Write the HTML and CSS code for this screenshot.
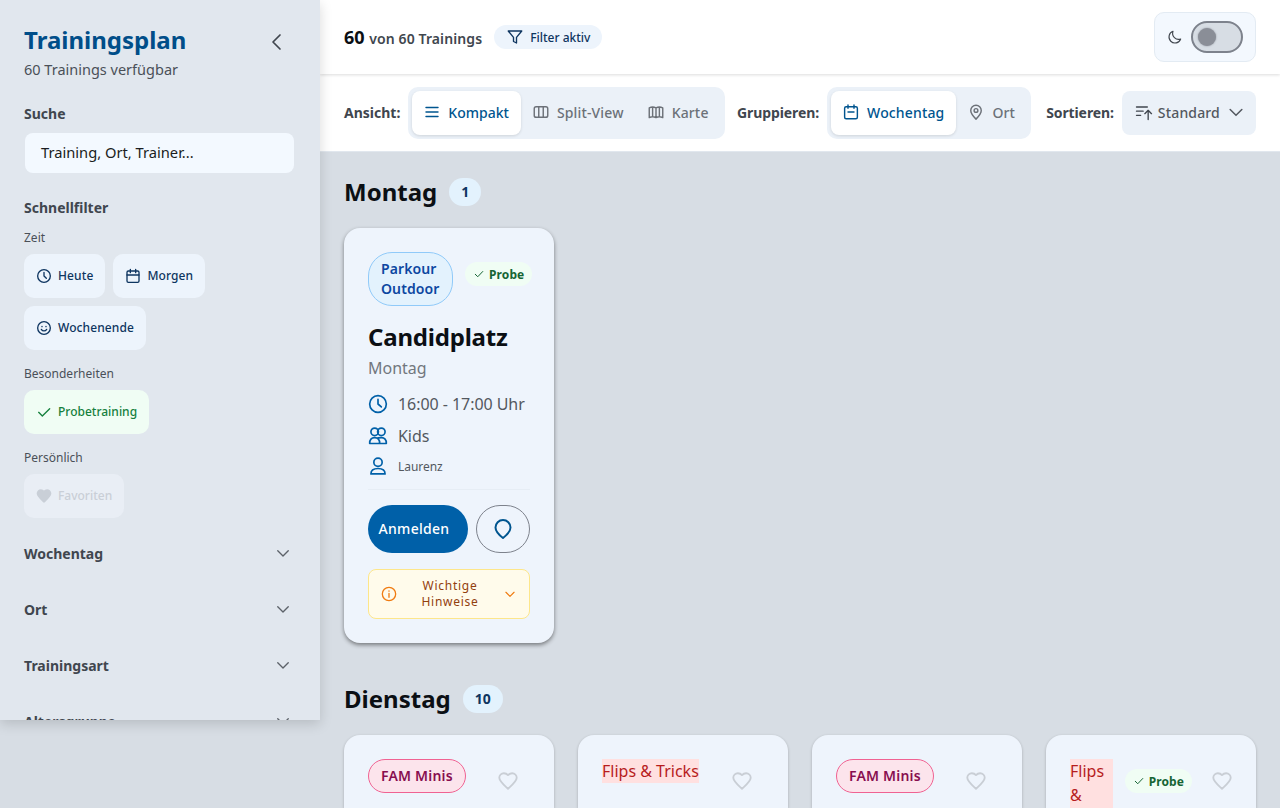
FILE: index.html
```html
<!DOCTYPE html>
<html lang="de">
<head>
    <meta charset="UTF-8">
    <title>Trainingsplan</title>
    <link rel="stylesheet" href="styles.css">
</head>
<body>
<div class="app">
    <aside class="sidebar">
        <div class="side-head">
            <div>
                <h1>Trainingsplan</h1>
                <p class="side-sub">60 Trainings verfügbar</p>
            </div>
            <svg class="side-back" width="24" height="24" viewBox="0 0 24 24"><path d="M15 5l-7 7 7 7"/></svg>
        </div>

        <h2 class="side-title">Suche</h2>
        <div class="search">Training, Ort, Trainer...</div>

        <h2 class="side-title quick">Schnellfilter</h2>
        <div class="small-label">Zeit</div>
        <div class="chips">
            <span class="chip">
                <svg viewBox="0 0 24 24"><circle cx="12" cy="12" r="9.500"/><path d="M12 6.500V12l3.500 3.500"/></svg>Heute
            </span>
            <span class="chip">
                <svg viewBox="0 0 24 24"><rect x="3" y="4.500" width="18" height="17" rx="2"/><path d="M8 2v5M16 2v5M3 10.500h18"/></svg>Morgen
            </span>
            <span class="chip">
                <svg viewBox="0 0 24 24"><circle cx="12" cy="12" r="9.500"/><path d="M8 14c1 1.600 2.400 2.300 4 2.300s3-.7 4-2.300M9 9.500v.5M15 9.500v.5"/></svg>Wochenende
            </span>
        </div>
        <div class="small-label">Besonderheiten</div>
        <div class="chips">
            <span class="chip chip-green">
                <svg viewBox="0 0 24 24"><path d="M4 12.500l5.500 5.500L20.500 7"/></svg>Probetraining
            </span>
        </div>
        <div class="small-label">Persönlich</div>
        <div class="chips chips-last">
            <span class="chip chip-off">
                <svg viewBox="0 0 24 24"><path class="solid" d="M12 21l-1.500-1.300C5.400 15.100 2 12.100 2 8.400 2 5.400 4.400 3 7.400 3c1.700 0 3.400.8 4.600 2.100C13.200 3.800 14.900 3 16.600 3 19.600 3 22 5.400 22 8.400c0 3.700-3.400 6.700-8.500 11.300z"/></svg>Favoriten
            </span>
        </div>

        <div class="acc">Wochentag<svg viewBox="0 0 24 24"><path d="M5 9l7 7 7-7"/></svg></div>
        <div class="acc">Ort<svg viewBox="0 0 24 24"><path d="M5 9l7 7 7-7"/></svg></div>
        <div class="acc">Trainingsart<svg viewBox="0 0 24 24"><path d="M5 9l7 7 7-7"/></svg></div>
        <div class="acc">Altersgruppe<svg viewBox="0 0 24 24"><path d="M5 9l7 7 7-7"/></svg></div>
    </aside>

    <main class="main">
        <header class="topbar">
            <div class="count"><b>60</b> von 60 Trainings</div>
            <span class="filter-pill">
                <svg viewBox="0 0 24 24"><path d="M3 4h18l-7 8.500V20l-4-2v-5.500z"/></svg>Filter aktiv
            </span>
            <div class="theme-box">
                <svg viewBox="0 0 24 24"><path d="M20.500 15A9 9 0 0 1 9 3.500a9 9 0 1 0 11.500 11.500z"/></svg>
                <span class="switch"><span class="knob"></span></span>
            </div>
        </header>

        <div class="toolbar">
            <span class="tool-label">Ansicht:</span>
            <div class="segment">
                <span class="seg active seg-tight">
                    <svg viewBox="0 0 24 24"><path d="M4 6h16M4 12h16M4 18h16"/></svg>Kompakt
                </span>
                <span class="seg">
                    <svg viewBox="0 0 24 24"><rect x="3" y="5" width="18" height="14" rx="2.500"/><path d="M9 5v14M15 5v14"/></svg>Split-View
                </span>
                <span class="seg">
                    <svg viewBox="0 0 24 24"><path d="M3 6.500c3-1.500 6-1.500 9 0 3-1.500 6-1.500 9 0v13c-3-1.500-6-1.500-9 0-3-1.500-6-1.500-9 0zM12 6.500v13M7.500 5.500v13M16.500 5.500v13"/></svg>Karte
                </span>
            </div>
            <span class="tool-label group-label">Gruppieren:</span>
            <div class="segment">
                <span class="seg active">
                    <svg viewBox="0 0 24 24"><rect x="3.500" y="5" width="17" height="16" rx="2"/><path d="M8 2.500V7M16 2.500V7M8 12h8"/></svg>Wochentag
                </span>
                <span class="seg">
                    <svg viewBox="0 0 24 24"><path d="M12 21.500c-4-4-7-7.500-7-11.500a7 7 0 0 1 14 0c0 4-3 7.500-7 11.500z"/><circle cx="12" cy="10" r="2.500"/></svg>Ort
                </span>
            </div>
            <span class="tool-label sort-label">Sortieren:</span>
            <div class="sort">
                <svg class="sort-icon" viewBox="0 0 24 24"><path d="M3 6h13M3 11h8M3 16h5M17 21V10M13 14l4-4 4 4"/></svg>
                Standard
                <svg class="sort-caret" viewBox="0 0 24 24"><path d="M5 9l7 7 7-7"/></svg>
            </div>
        </div>

        <div class="content">
            <div class="day-head">
                <h2>Montag</h2>
                <span class="day-count">1</span>
            </div>
            <div class="grid">
                <article class="card card-first">
                    <div class="card-top">
                        <span class="tag tag-blue">Parkour Outdoor</span>
                        <span class="probe">
                            <svg viewBox="0 0 24 24"><path d="M4.500 12.500l5 5 10-10.500"/></svg>Probe
                        </span>
                    </div>
                    <h3>Candidplatz</h3>
                    <div class="card-day">Montag</div>
                    <div class="info">
                        <svg viewBox="0 0 24 24"><circle cx="12" cy="12" r="10"/><path d="M12 6.500V12l4 3.500"/></svg>
                        16:00 - 17:00 Uhr
                    </div>
                    <div class="info">
                        <svg viewBox="0 0 24 24"><circle cx="8" cy="7" r="4.500"/><circle cx="16" cy="7" r="4.500"/><path d="M2 21c0-4.500 2-7 6-7s6 2.500 6 7zM12.500 14.200c1-.2 2.200-.2 3.500-.2 4 0 6 2.500 6 7h-8"/></svg>
                        Kids
                    </div>
                    <div class="info info-small">
                        <svg viewBox="0 0 24 24"><circle cx="12" cy="7.500" r="5"/><path d="M3.500 21.500c0-4.500 3-6.500 8.500-6.500s8.500 2 8.500 6.500z"/></svg>
                        Laurenz
                    </div>
                    <div class="actions">
                        <span class="btn-main">Anmelden</span>
                        <span class="btn-pin">
                            <svg viewBox="0 0 24 24"><path d="M12 21c-4.500-3.500-7.500-7-7.500-10.500a7.500 7.500 0 0 1 15 0c0 3.500-3 7-7.500 10.500z"/></svg>
                        </span>
                    </div>
                    <div class="notice">
                        <svg viewBox="0 0 24 24"><circle cx="12" cy="12" r="10"/><path d="M12 11v6M12 7.200v.6"/></svg>
                        <span class="notice-text">Wichtige Hinweise</span>
                        <svg class="notice-caret" viewBox="0 0 24 24"><path d="M5 9l7 7 7-7"/></svg>
                    </div>
                </article>
            </div>

            <div class="day-head day-two">
                <h2>Dienstag</h2>
                <span class="day-count">10</span>
            </div>
            <div class="grid">
                <article class="card">
                    <div class="card-top">
                        <span class="tag tag-pink">FAM Minis</span>
                        <svg class="fav" viewBox="0 0 24 24"><path d="M12 20.500l-1.400-1.300C5.600 14.700 2.500 11.900 2.500 8.500 2.500 5.700 4.700 3.500 7.500 3.500c1.700 0 3.400.8 4.500 2.100 1.100-1.300 2.800-2.100 4.500-2.100 2.800 0 5 2.200 5 5 0 3.400-3.100 6.200-8.100 10.700z"/></svg>
                    </div>
                </article>
                <article class="card">
                    <div class="card-top">
                        <span class="tag-plain">Flips &amp; Tricks</span>
                        <svg class="fav" viewBox="0 0 24 24"><path d="M12 20.500l-1.400-1.300C5.600 14.700 2.500 11.900 2.500 8.500 2.500 5.700 4.700 3.500 7.500 3.500c1.700 0 3.400.8 4.500 2.100 1.100-1.300 2.800-2.100 4.500-2.100 2.800 0 5 2.200 5 5 0 3.400-3.100 6.200-8.100 10.700z"/></svg>
                    </div>
                </article>
                <article class="card">
                    <div class="card-top">
                        <span class="tag tag-pink">FAM Minis</span>
                        <svg class="fav" viewBox="0 0 24 24"><path d="M12 20.500l-1.400-1.300C5.600 14.700 2.500 11.900 2.500 8.500 2.500 5.700 4.700 3.500 7.500 3.500c1.700 0 3.400.8 4.500 2.100 1.100-1.300 2.800-2.100 4.500-2.100 2.800 0 5 2.200 5 5 0 3.400-3.100 6.200-8.100 10.700z"/></svg>
                    </div>
                </article>
                <article class="card">
                    <div class="card-top">
                        <span class="tag-plain tag-narrow">Flips &amp; Tricks</span>
                        <span class="probe probe-two">
                            <svg viewBox="0 0 24 24"><path d="M4.500 12.500l5 5 10-10.500"/></svg>Probe
                        </span>
                        <svg class="fav fav-tight" viewBox="0 0 24 24"><path d="M12 20.500l-1.400-1.300C5.600 14.700 2.500 11.900 2.500 8.500 2.500 5.700 4.700 3.500 7.500 3.500c1.700 0 3.400.8 4.500 2.100 1.100-1.300 2.800-2.100 4.500-2.100 2.800 0 5 2.200 5 5 0 3.400-3.100 6.200-8.100 10.700z"/></svg>
                    </div>
                </article>
            </div>
        </div>
    </main>
</div>
</body>
</html>
```

FILE: styles.css
```css
* {
    box-sizing: border-box;
    margin: 0;
    padding: 0;
}

html, body {
    height: 808px;
    overflow: hidden;
}

body {
    background: #d7dde4;
    font-family: "Noto Sans", sans-serif;
    color: #0b0f14;
}

svg {
    fill: none;
    stroke: currentColor;
    stroke-width: 2;
    stroke-linecap: round;
    stroke-linejoin: round;
    flex: none;
}

.app {
    display: flex;
    height: 808px;
    align-items: flex-start;
}

/* sidebar */
.sidebar {
    width: 320px;
    height: 720px;
    flex: none;
    overflow: hidden;
    padding: 24px;
    background: #e1e7ee;
    box-shadow: 0 4px 12px rgba(0, 0, 0, 0.15);
    position: relative;
    z-index: 2;
}

.side-head {
    display: flex;
    justify-content: space-between;
    align-items: flex-start;
    height: 57px;
}

.side-head h1 {
    font-size: 24px;
    line-height: 32px;
    font-weight: 700;
    color: #004e89;
}

.side-sub {
    font-size: 14.500px;
    line-height: 20px;
    margin-top: 3px;
    color: #4a5058;
}

.side-back {
    width: 24px;
    height: 24px;
    margin: 6px 7px 0 0;
    color: #40464e;
    stroke-width: 1.700;
}

.side-title {
    font-size: 14px;
    line-height: 20px;
    font-weight: 700;
    color: #40464e;
    margin-top: 23px;
}

.search {
    width: 269px;
    height: 40px;
    margin: 9px 0 0 1px;
    padding: 0 16px;
    border-radius: 8px;
    background: #f3f9ff;
    font-size: 14.700px;
    line-height: 38px;
    color: #1a1d21;
}

.side-title.quick {
    margin-top: 25px;
}

.small-label {
    font-size: 12px;
    line-height: 16px;
    color: #4a5058;
    margin-top: 16px;
}

.side-title + .small-label {
    margin-top: 12px;
}

.chips {
    display: flex;
    flex-wrap: wrap;
    gap: 8px;
    margin-top: 8px;
}

.chips-last {
    margin-bottom: 7px;
}

.chip {
    display: flex;
    align-items: center;
    gap: 6px;
    height: 44px;
    padding: 0 12px 1px;
    border-radius: 10px;
    background: #edf4fc;
    font-size: 12px;
    font-weight: 500;
    letter-spacing: 0.1px;
    color: #0e3560;
}

.chip svg {
    width: 16px;
    height: 16px;
}

.chip-green {
    background: #f0fdf4;
    letter-spacing: 0;
    color: #15803d;
}

.chip-off {
    background: #e9eef5;
    letter-spacing: 0;
    color: #c9cfd7;
}

.chip-off .solid {
    fill: currentColor;
}

.acc {
    display: flex;
    justify-content: space-between;
    align-items: center;
    height: 56px;
    padding-right: 4px;
    font-size: 14px;
    font-weight: 700;
    color: #40464e;
}

.acc svg {
    width: 18px;
    height: 18px;
    color: #5c6269;
    stroke-width: 1.800;
}

/* top */
.main {
    flex: 1;
    min-width: 0;
}

.topbar {
    display: flex;
    align-items: center;
    height: 74px;
    padding: 0 24px;
    background: #fff;
    box-shadow: 0 1px 3px rgba(0, 0, 0, 0.14);
    position: relative;
    z-index: 1;
}

.count {
    font-size: 14px;
    font-weight: 600;
    letter-spacing: 0.1px;
    color: #40464e;
}

.count b {
    margin-right: 1px;
    font-size: 18px;
    font-weight: 700;
    letter-spacing: 0;
    color: #0b0f14;
}

.filter-pill {
    display: flex;
    align-items: center;
    gap: 6px;
    height: 24px;
    margin-left: 12px;
    padding: 0 12px;
    border-radius: 12px;
    background: #edf4fc;
    font-size: 12px;
    font-weight: 500;
    color: #0e3560;
}

.filter-pill svg {
    width: 18px;
    height: 18px;
    stroke-width: 1.800;
}

.theme-box {
    display: flex;
    align-items: center;
    gap: 8px;
    height: 50px;
    margin-left: auto;
    padding: 0 12px;
    border: 1px solid #e3ebf3;
    border-radius: 10px;
    background: #f3f8fe;
}

.theme-box svg {
    width: 16px;
    height: 16px;
    color: #40464e;
    stroke-width: 1.700;
}

.switch {
    display: flex;
    align-items: center;
    width: 52px;
    height: 32px;
    padding-left: 5px;
    border: 2px solid #7d828c;
    border-radius: 16px;
    background: #d7dde4;
}

.knob {
    width: 18px;
    height: 18px;
    border-radius: 50%;
    background: #8a8e97;
    box-shadow: 0 0 2px #8a8e97;
}

.toolbar {
    display: flex;
    align-items: center;
    height: 78px;
    padding: 1px 24px 0;
    background: #fff;
    border-bottom: 1px solid #e1e7ee;
    font-size: 14px;
    white-space: nowrap;
}

.tool-label {
    padding-bottom: 2px;
    font-weight: 700;
    color: #40464e;
}

.group-label {
    margin-left: 12.500px;
    letter-spacing: -0.1px;
}

.sort-label {
    margin-left: 15px;
    letter-spacing: -0.1px;
}

.segment {
    display: flex;
    flex: none;
    margin-left: 8px;
    padding: 4px;
    border-radius: 10px;
    background: #ebf1f8;
}

.seg {
    display: flex;
    align-items: center;
    gap: 7px;
    height: 44px;
    padding: 0 12px 2px 11px;
    border-radius: 8px;
    font-weight: 500;
    letter-spacing: 0.15px;
    color: #6c7178;
}

.seg svg {
    width: 18px;
    height: 18px;
    stroke-width: 1.900;
}

.seg.active {
    background: #fff;
    box-shadow: 0 1px 3px rgba(0, 0, 0, 0.12);
    color: #00558f;
}

.seg.seg-tight {
    letter-spacing: 0;
}

.sort {
    display: flex;
    align-items: center;
    flex: none;
    height: 44px;
    margin-left: 8px;
    padding: 0 10px 2px 12px;
    border-radius: 8px;
    background: #ebf1f8;
    font-weight: 500;
    letter-spacing: 0.15px;
    color: #53585f;
}

.sort-icon {
    width: 20px;
    height: 20px;
    margin-right: 4px;
    color: #40464e;
    stroke-width: 1.600;
}

.sort-caret {
    width: 20px;
    height: 20px;
    margin-left: 6px;
    stroke-width: 1.800;
}

/* list */
.content {
    padding: 24px;
}

.day-head {
    display: flex;
    align-items: center;
    gap: 12px;
    height: 32px;
    margin-bottom: 20px;
}

.day-head h2 {
    font-size: 24px;
    line-height: 32px;
    font-weight: 700;
    color: #0b0f14;
}

.day-count {
    min-width: 32px;
    height: 28px;
    padding: 0 12px;
    border-radius: 14px;
    background: #e3f2fd;
    font-size: 14px;
    line-height: 28px;
    font-weight: 700;
    text-align: center;
    color: #0e3560;
}

.day-two {
    margin-top: 40px;
}

.grid {
    display: grid;
    grid-template-columns: repeat(4, 210px);
    gap: 24px;
}

.card {
    overflow: hidden;
    padding: 24px;
    border-radius: 16px 16px 0 0;
    background: #eef4fc;
    box-shadow: 0 1px 3px rgba(0, 0, 0, 0.24);
    height: 73px;
}

.card-first {
    height: 415px;
    border-radius: 16px;
    box-shadow: 0 2px 4px rgba(0, 0, 0, 0.45);
}

.card-top {
    display: flex;
    align-items: flex-start;
    gap: 12px;
}

.tag {
    padding: 6px 12px;
    border: 1px solid;
    border-radius: 24px;
    font-size: 14px;
    line-height: 20px;
    font-weight: 600;
    letter-spacing: 0.1px;
}

.tag-blue {
    width: 85px;
    flex: none;
    background: #e3f2fd;
    border-color: #90caf9;
    color: #0d47a1;
}

.tag-pink {
    border-radius: 17px;
    background: #fce4ec;
    border-color: #f06292;
    color: #880e4f;
    letter-spacing: 0.2px;
    white-space: nowrap;
}

.tag-plain {
    background: #ffe0e0;
    color: #b71c1c;
    font-size: 16px;
    line-height: 24px;
}

.tag-narrow {
    width: 44px;
}

.card-top .fav {
    width: 22px;
    height: 22px;
    margin: 11px 11px 0 auto;
    color: #c9ced5;
}

.card-top .fav-tight {
    margin: 11px 0 0 7px;
}

.probe {
    display: flex;
    align-items: center;
    gap: 4px;
    height: 24px;
    margin-top: 10px;
    padding: 0 8px;
    border-radius: 12px;
    background: #f0fdf4;
    font-size: 12px;
    font-weight: 700;
    letter-spacing: 0.1px;
    color: #166534;
}

.probe svg {
    width: 12px;
    height: 12px;
}

.probe-two {
    flex: none;
}

.card h3 {
    margin-top: 13px;
    font-size: 24px;
    line-height: 36px;
    font-weight: 700;
    letter-spacing: -0.2px;
    color: #0b0f14;
}

.card-day {
    font-size: 16px;
    line-height: 24px;
    color: #72777e;
    margin-top: 1px;
}

.info {
    display: flex;
    align-items: center;
    gap: 10px;
    height: 32px;
    font-size: 16px;
    letter-spacing: -0.05px;
    color: #53585f;
}

.card-day + .info {
    margin-top: 8px;
}

.info svg {
    width: 20px;
    height: 20px;
    color: #0060a8;
    stroke-width: 2;
}

.info-small {
    height: 28px;
    font-size: 12px;
}

.actions {
    display: flex;
    gap: 8px;
    margin-top: 9px;
    padding-top: 15px;
    border-top: 1px solid #e6edf5;
}

.btn-main {
    width: 100px;
    height: 48px;
    padding-right: 8px;
    border-radius: 24px;
    background: #0060a8;
    font-size: 14px;
    line-height: 48px;
    font-weight: 500;
    letter-spacing: 0.02em;
    text-align: center;
    color: #fff;
}

.btn-pin {
    display: flex;
    align-items: center;
    justify-content: center;
    width: 54px;
    height: 48px;
    border: 1px solid #7d828c;
    border-radius: 24px;
    color: #00558f;
}

.btn-pin svg {
    width: 24px;
    height: 24px;
}

.notice {
    display: flex;
    align-items: center;
    height: 50px;
    margin-top: 16px;
    padding: 0 12px;
    border: 1px solid #fde68a;
    border-radius: 8px;
    background: #fffbeb;
    color: #f07c12;
}

.notice svg {
    width: 16px;
    height: 16px;
}

.notice .notice-caret {
    width: 14px;
    height: 14px;
}

.notice-text {
    flex: 1;
    padding: 0 10px;
    font-size: 12px;
    line-height: 16px;
    letter-spacing: 0.06em;
    text-align: center;
    color: #92400e;
}
```
